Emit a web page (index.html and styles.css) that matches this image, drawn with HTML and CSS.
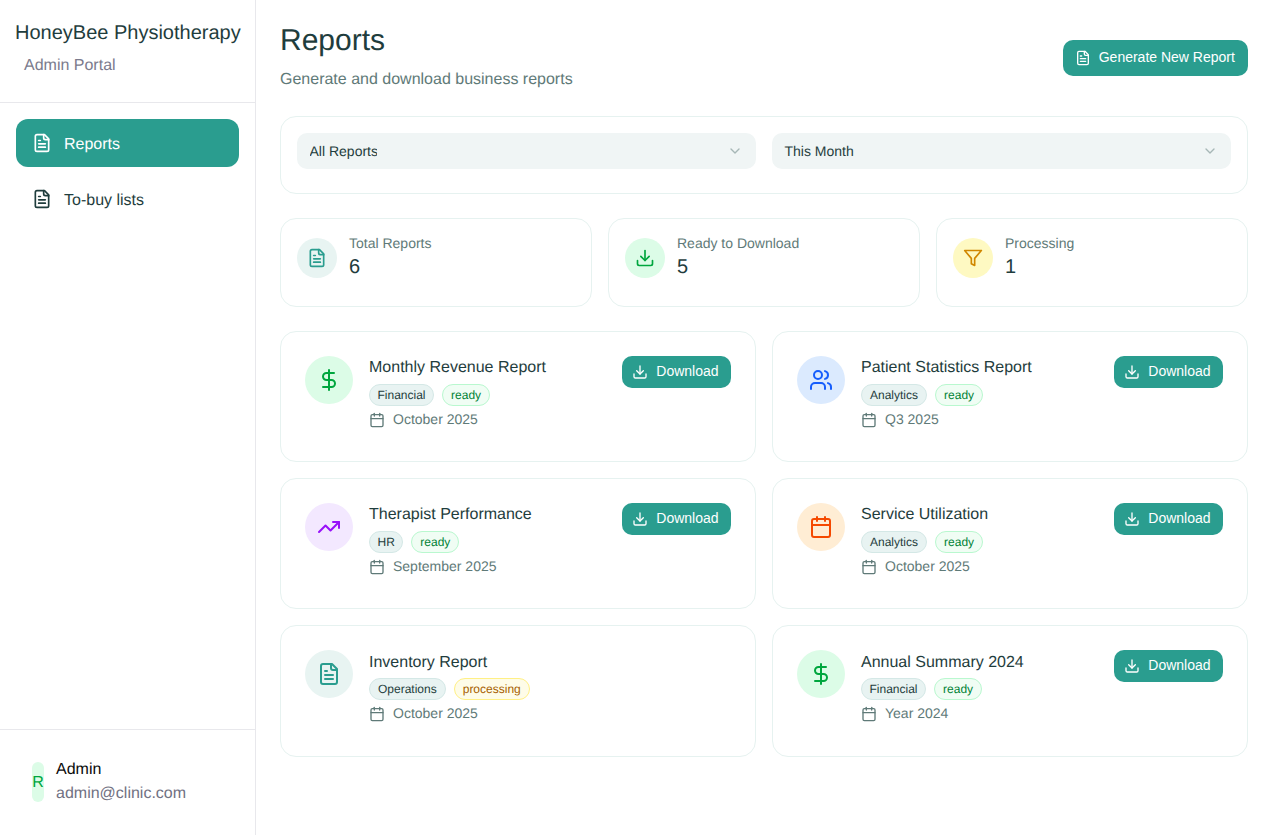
FILE: index.html
```html
<!DOCTYPE html>
<html lang="en">
<head>
<meta charset="utf-8">
<title>Reports</title>
<link rel="stylesheet" href="styles.css">
</head>
<body>
<svg class="defs" width="0" height="0" aria-hidden="true">
  <symbol id="i-file" viewBox="0 0 24 24"><path d="M15 2H6a2 2 0 0 0-2 2v16a2 2 0 0 0 2 2h12a2 2 0 0 0 2-2V7Z"/><path d="M14 2v4a2 2 0 0 0 2 2h4"/><path d="M10 9H8"/><path d="M16 13H8"/><path d="M16 17H8"/></symbol>
  <symbol id="i-download" viewBox="0 0 24 24"><path d="M21 15v4a2 2 0 0 1-2 2H5a2 2 0 0 1-2-2v-4"/><polyline points="7 10 12 15 17 10"/><line x1="12" y1="15" x2="12" y2="3"/></symbol>
  <symbol id="i-funnel" viewBox="0 0 24 24"><polygon points="22 3 2 3 10 12.46 10 19 14 21 14 12.46 22 3"/></symbol>
  <symbol id="i-dollar" viewBox="0 0 24 24"><line x1="12" y1="2" x2="12" y2="22"/><path d="M17 5H9.5a3.5 3.5 0 0 0 0 7h5a3.5 3.5 0 0 1 0 7H6"/></symbol>
  <symbol id="i-users" viewBox="0 0 24 24"><path d="M16 21v-2a4 4 0 0 0-4-4H6a4 4 0 0 0-4 4v2"/><circle cx="9" cy="7" r="4"/><path d="M22 21v-2a4 4 0 0 0-3-3.87"/><path d="M16 3.13a4 4 0 0 1 0 7.75"/></symbol>
  <symbol id="i-trend" viewBox="0 0 24 24"><polyline points="22 7 13.5 15.5 8.5 10.5 2 17"/><polyline points="16 7 22 7 22 13"/></symbol>
  <symbol id="i-calendar" viewBox="0 0 24 24"><path d="M8 2v4"/><path d="M16 2v4"/><rect x="3" y="4" width="18" height="18" rx="2"/><path d="M3 10h18"/></symbol>
  <symbol id="i-chevron" viewBox="0 0 24 24"><path d="m6 9 6 6 6-6"/></symbol>
</svg>
<div class="app">
  <aside class="sidebar">
    <div class="brand">
      <div class="brand-name">HoneyBee Physiotherapy</div>
      <div class="brand-sub">Admin Portal</div>
    </div>
    <nav class="nav">
      <a class="nav-item active"><svg class="ic ic-20"><use href="#i-file"/></svg><span>Reports</span></a>
      <a class="nav-item"><svg class="ic ic-20"><use href="#i-file"/></svg><span>To-buy lists</span></a>
    </nav>
    <div class="user">
      <div class="avatar">R</div>
      <div class="user-text">
        <div class="user-name">Admin</div>
        <div class="user-mail">admin@clinic.com</div>
      </div>
    </div>
  </aside>
  <main class="main">
    <header class="page-head">
      <div>
        <h1 class="page-title">Reports</h1>
        <p class="page-sub">Generate and download business reports</p>
      </div>
      <button class="btn btn-generate"><svg class="ic ic-16"><use href="#i-file"/></svg>Generate New Report</button>
    </header>

    <section class="filters">
      <div class="select"><span class="select-value clip">All Reports</span><svg class="ic ic-16 chev"><use href="#i-chevron"/></svg></div>
      <div class="select"><span class="select-value">This Month</span><svg class="ic ic-16 chev"><use href="#i-chevron"/></svg></div>
    </section>

    <section class="stats">
      <div class="stat">
        <div class="circle c-40 teal"><svg class="ic ic-20"><use href="#i-file"/></svg></div>
        <div><div class="stat-label">Total Reports</div><div class="stat-value">6</div></div>
      </div>
      <div class="stat">
        <div class="circle c-40 green"><svg class="ic ic-20"><use href="#i-download"/></svg></div>
        <div><div class="stat-label">Ready to Download</div><div class="stat-value">5</div></div>
      </div>
      <div class="stat">
        <div class="circle c-40 yellow"><svg class="ic ic-20"><use href="#i-funnel"/></svg></div>
        <div><div class="stat-label">Processing</div><div class="stat-value">1</div></div>
      </div>
    </section>

    <section class="reports">
      <article class="report">
        <div class="circle c-48 green"><svg class="ic ic-24"><use href="#i-dollar"/></svg></div>
        <div class="report-body">
          <h3 class="report-title">Monthly Revenue Report</h3>
          <div class="tags"><span class="tag tight">Financial</span><span class="tag ready">ready</span></div>
          <div class="report-date"><svg class="ic ic-16"><use href="#i-calendar"/></svg>October 2025</div>
        </div>
        <button class="btn btn-dl"><svg class="ic ic-16"><use href="#i-download"/></svg>Download</button>
      </article>
      <article class="report">
        <div class="circle c-48 blue"><svg class="ic ic-24"><use href="#i-users"/></svg></div>
        <div class="report-body">
          <h3 class="report-title">Patient Statistics Report</h3>
          <div class="tags"><span class="tag">Analytics</span><span class="tag ready">ready</span></div>
          <div class="report-date"><svg class="ic ic-16"><use href="#i-calendar"/></svg>Q3 2025</div>
        </div>
        <button class="btn btn-dl"><svg class="ic ic-16"><use href="#i-download"/></svg>Download</button>
      </article>
      <article class="report">
        <div class="circle c-48 purple"><svg class="ic ic-24"><use href="#i-trend"/></svg></div>
        <div class="report-body">
          <h3 class="report-title">Therapist Performance</h3>
          <div class="tags"><span class="tag tight">HR</span><span class="tag ready">ready</span></div>
          <div class="report-date"><svg class="ic ic-16"><use href="#i-calendar"/></svg>September 2025</div>
        </div>
        <button class="btn btn-dl"><svg class="ic ic-16"><use href="#i-download"/></svg>Download</button>
      </article>
      <article class="report">
        <div class="circle c-48 orange"><svg class="ic ic-24"><use href="#i-calendar"/></svg></div>
        <div class="report-body">
          <h3 class="report-title">Service Utilization</h3>
          <div class="tags"><span class="tag">Analytics</span><span class="tag ready">ready</span></div>
          <div class="report-date"><svg class="ic ic-16"><use href="#i-calendar"/></svg>October 2025</div>
        </div>
        <button class="btn btn-dl"><svg class="ic ic-16"><use href="#i-download"/></svg>Download</button>
      </article>
      <article class="report">
        <div class="circle c-48 teal"><svg class="ic ic-24"><use href="#i-file"/></svg></div>
        <div class="report-body">
          <h3 class="report-title">Inventory Report</h3>
          <div class="tags"><span class="tag">Operations</span><span class="tag processing">processing</span></div>
          <div class="report-date"><svg class="ic ic-16"><use href="#i-calendar"/></svg>October 2025</div>
        </div>
      </article>
      <article class="report">
        <div class="circle c-48 green"><svg class="ic ic-24"><use href="#i-dollar"/></svg></div>
        <div class="report-body">
          <h3 class="report-title">Annual Summary 2024</h3>
          <div class="tags"><span class="tag tight">Financial</span><span class="tag ready">ready</span></div>
          <div class="report-date"><svg class="ic ic-16"><use href="#i-calendar"/></svg>Year 2024</div>
        </div>
        <button class="btn btn-dl"><svg class="ic ic-16"><use href="#i-download"/></svg>Download</button>
      </article>
    </section>
  </main>
</div>
</body>
</html>
```
FILE: styles.css
```css
* { box-sizing: border-box; }
html, body { margin: 0; height: 100%; }
body {
  font-family: "Liberation Sans", Arial, sans-serif;
  color: #1f3d3d;
  background: #fff;
  font-size: 16px;
  text-rendering: geometricPrecision;
}
.defs { position: absolute; }
.ic {
  fill: none;
  stroke: currentColor;
  stroke-width: 2;
  stroke-linecap: round;
  stroke-linejoin: round;
  flex: none;
  display: block;
}
.ic-16 { width: 16px; height: 16px; }
.ic-20 { width: 20px; height: 20px; }
.ic-24 { width: 24px; height: 24px; }

.app { display: flex; height: 835px; overflow: hidden; }

.sidebar {
  width: 256px;
  flex: none;
  display: flex;
  flex-direction: column;
  border-right: 1px solid #e8e8ec;
  background: #fff;
}
.brand {
  height: 103px;
  border-bottom: 1px solid #e8e8ec;
  padding: 21px 0 0 15px;
}
.brand-name { font-size: 20px; line-height: 24px; white-space: nowrap; color: #1f3d3d; }
.brand-sub { margin: 9px 0 0 9px; line-height: 24px; color: #7b7b8d; white-space: nowrap; }
.nav {
  flex: 1;
  padding: 16px;
  display: flex;
  flex-direction: column;
  gap: 8px;
}
.nav-item {
  height: 48px;
  width: 223px;
  display: flex;
  align-items: center;
  gap: 12px;
  padding: 0 16px;
  border-radius: 12px;
  color: #1f3d3d;
}
.nav-item span { padding-top: 4px; }
.nav-item.active { background: #2a9d8f; color: #fff; }
.user {
  height: 106px;
  border-top: 1px solid #e8e8ec;
  padding: 26px 16px 0 32px;
  display: flex;
  gap: 12px;
}
.avatar {
  width: 12px;
  height: 40px;
  margin-top: 6px;
  padding-top: 2px;
  border-radius: 8px;
  background: #dcfce7;
  color: #00a63e;
  display: flex;
  align-items: center;
  justify-content: center;
}
.user-text { padding-top: 2px; }
.user-name { line-height: 24px; color: #0a0a0a; }
.user-mail { line-height: 24px; color: #717182; white-space: nowrap; }

.main { flex: 1; min-width: 0; padding: 16px 39px 0 24px; }
.page-head { display: flex; justify-content: space-between; align-items: center; height: 84px; }
.page-title { margin: -2px 0 0; font-size: 30px; line-height: 36px; font-weight: 400; color: #1f3d3d; }
.page-sub { margin: 9px 0 0; font-size: 16px; line-height: 24px; color: #5f7a78; }

.btn {
  font: inherit;
  font-size: 14px;
  color: #fff;
  background: #2a9d8f;
  border: 0;
  display: flex;
  align-items: center;
  white-space: nowrap;
  padding: 0 0 2px;
}
.btn .ic { margin-top: 2px; }
.btn-generate { height: 36px; width: 185.3px; border-radius: 10px; gap: 8px; padding-left: 12px; line-height: 20px; }
.btn-dl { height: 32px; width: 108.7px; border-radius: 10px; gap: 8px; padding-left: 10px; flex: none; }

.filters {
  margin-top: 16px;
  height: 78px;
  border: 1px solid #e6f2f0;
  border-radius: 16px;
  padding: 16px;
  display: grid;
  grid-template-columns: 1fr 1fr;
  gap: 16px;
  align-items: start;
}
.select {
  height: 36px;
  background: #f0f5f5;
  border-radius: 10px;
  padding: 0 13px 0 12.5px;
  display: flex;
  align-items: center;
  justify-content: space-between;
  font-size: 14px;
  color: #1f3d3d;
}
.select-value { line-height: 20px; white-space: nowrap; }
.clip { width: 67px; overflow: hidden; }
.chev { opacity: .5; color: #5f7a78; }

.stats {
  margin-top: 24px;
  display: grid;
  grid-template-columns: repeat(3, 1fr);
  gap: 16px;
}
.stat {
  height: 89px;
  border: 1px solid #e6f2f0;
  border-radius: 16px;
  padding: 14px 16px;
  display: flex;
  gap: 12px;
  align-items: flex-start;
}
.stat .circle { margin-top: 5px; }
.stat-label { font-size: 14px; line-height: 20px; color: #5f7a78; }
.stat-value { font-size: 20px; line-height: 28px; color: #1f3d3d; }

.circle {
  border-radius: 50%;
  display: flex;
  align-items: center;
  justify-content: center;
  flex: none;
}
.c-40 { width: 40px; height: 40px; }
.c-48 { width: 48px; height: 48px; }
.teal { background: #e8f4f2; color: #2a9d8f; }
.green { background: #dcfce7; color: #00a63e; }
.yellow { background: #fef9c2; color: #d08700; }
.blue { background: #dbeafe; color: #155dfc; }
.purple { background: #f3e8ff; color: #9810fa; }
.orange { background: #ffedd4; color: #f54900; }

.reports {
  margin-top: 24px;
  display: grid;
  grid-template-columns: 1fr 1fr;
  grid-auto-rows: 131.2px;
  gap: 16px;
}
.report {
  border: 1px solid #e6f2f0;
  border-radius: 16px;
  padding: 24px;
  display: flex;
  gap: 16px;
  align-items: flex-start;
}
.report-body { flex: 1; min-width: 0; }
.report-title { margin: .2px 0 0; font-size: 16px; line-height: 24px; font-weight: 400; color: #1f3d3d; }
.tags { display: flex; gap: 8px; margin-top: 3.8px; }
.tag {
  height: 22px;
  border: 1px solid #d4e8e6;
  background: #e8f3f2;
  border-radius: 11px;
  padding: 0 8px;
  font-size: 12px;
  line-height: 20px;
  color: #1f3d3d;
}
.tag.tight { padding: 0 7.5px; }
.tag.ready { background: #f0fdf4; border-color: #b9f8cf; color: #008236; }
.tag.processing { background: #fefce8; border-color: #fff085; color: #a65f00; }
.report-date {
  margin-top: 3px;
  display: flex;
  align-items: center;
  gap: 8px;
  font-size: 14px;
  line-height: 20px;
  color: #5f7a78;
}
.report-date .ic { margin-top: 2px; }
```
